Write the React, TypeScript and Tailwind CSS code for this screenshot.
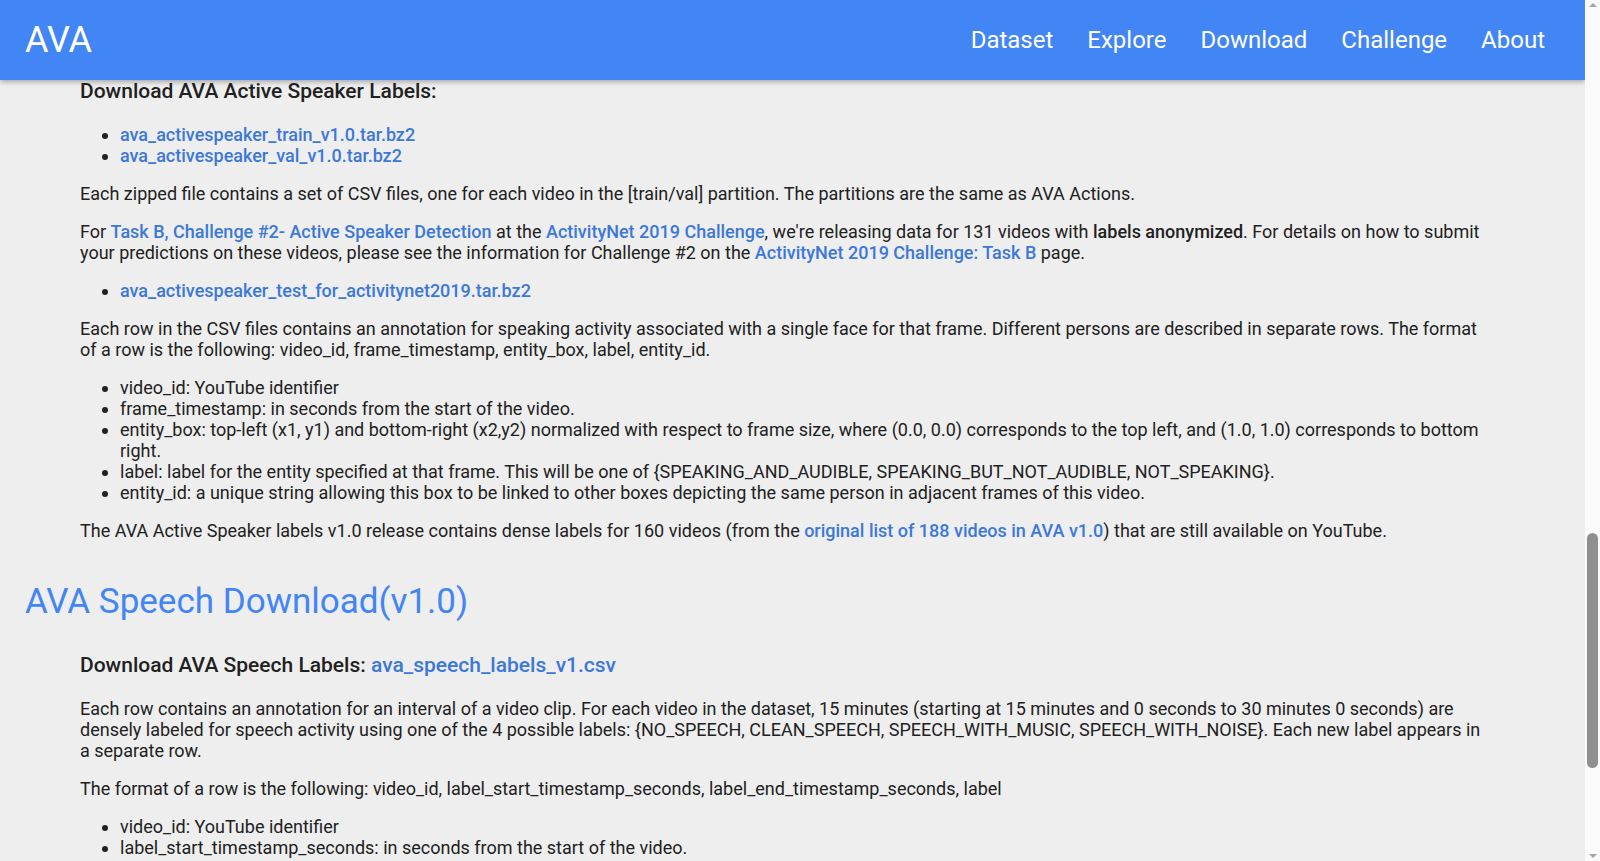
import React from "react";

const A = ({ children }: { children: React.ReactNode }) => (
  <a href="#" className="text-[#3c78d8] font-medium">{children}</a>
);

export default function App() {
  return (
    <div className="flex h-[861px] overflow-hidden" style={{ fontFamily: "Roboto, 'Liberation Sans', sans-serif" }}>
      <div className="flex-1 overflow-hidden bg-[#eeeeee] text-[#212121]">
        <header className="relative z-10 h-[80px] bg-[#4285f4] shadow-[0_2px_5px_rgba(0,0,0,0.3)] flex items-center justify-between pl-[25px] pr-[40px]">
          <div className="text-white text-[36px] font-normal">AVA</div>
          <nav className="flex gap-[34px] text-white text-[24px]">
            <span>Dataset</span><span>Explore</span><span>Download</span><span>Challenge</span><span>About</span>
          </nav>
        </header>
        <main className="text-[18px] leading-[21px]">
          <div className="pl-[80px] pr-[100px]">
            <h3 className="text-[21px] font-medium leading-[25px] -mt-[1px]">Download AVA Active Speaker Labels:</h3>
            <ul className="list-disc pl-[40px] mt-[20px]">
              <li><A>ava_activespeaker_train_v1.0.tar.bz2</A></li>
              <li><A>ava_activespeaker_val_v1.0.tar.bz2</A></li>
            </ul>
            <p className="mt-[17px]">Each zipped file contains a set of CSV files, one for each video in the [train/val] partition. The partitions are the same as AVA Actions.</p>
            <p className="mt-[17px]">For <A>Task B, Challenge #2- Active Speaker Detection</A> at the <A>ActivityNet 2019 Challenge</A>, we're releasing data for 131 videos with <b className="font-medium">labels anonymized</b>. For details on how to submit your predictions on these videos, please see the information for Challenge #2 on the <A>ActivityNet 2019 Challenge: Task B</A> page.</p>
            <ul className="list-disc pl-[40px] mt-[17px]">
              <li><A>ava_activespeaker_test_for_activitynet2019.tar.bz2</A></li>
            </ul>
            <p className="mt-[17px]">Each row in the CSV files contains an annotation for speaking activity associated with a single face for that frame. Different persons are described in separate rows. The format of a row is the following: video_id, frame_timestamp, entity_box, label, entity_id.</p>
            <ul className="list-disc pl-[40px] mt-[17px]">
              <li>video_id: YouTube identifier</li>
              <li>frame_timestamp: in seconds from the start of the video.</li>
              <li>entity_box: top-left (x1, y1) and bottom-right (x2,y2) normalized with respect to frame size, where (0.0, 0.0) corresponds to the top left, and (1.0, 1.0) corresponds to bottom right.</li>
              <li>label: label for the entity specified at that frame. This will be one of {"{"}SPEAKING_AND_AUDIBLE, SPEAKING_BUT_NOT_AUDIBLE, NOT_SPEAKING{"}"}.</li>
              <li>entity_id: a unique string allowing this box to be linked to other boxes depicting the same person in adjacent frames of this video.</li>
            </ul>
            <p className="mt-[17px]">The AVA Active Speaker labels v1.0 release contains dense labels for 160 videos (from the <A>original list of 188 videos in AVA v1.0</A>) that are still available on YouTube.</p>
          </div>
          <h2 className="pl-[25px] text-[35px] leading-[42px] text-[#4285f4] mt-[40px]">AVA Speech Download(v1.0)</h2>
          <div className="pl-[80px] pr-[100px]">
            <h3 className="text-[21px] font-medium leading-[25px] mt-[30px]">Download AVA Speech Labels: <A>ava_speech_labels_v1.csv</A></h3>
            <p className="mt-[20px]">Each row contains an annotation for an interval of a video clip. For each video in the dataset, 15 minutes (starting at 15 minutes and 0 seconds to 30 minutes 0 seconds) are densely labeled for speech activity using one of the 4 possible labels: {"{"}NO_SPEECH, CLEAN_SPEECH, SPEECH_WITH_MUSIC, SPEECH_WITH_NOISE{"}"}. Each new label appears in a separate row.</p>
            <p className="mt-[17px]">The format of a row is the following: video_id, label_start_timestamp_seconds, label_end_timestamp_seconds, label</p>
            <ul className="list-disc pl-[40px] mt-[17px]">
              <li>video_id: YouTube identifier</li>
              <li>label_start_timestamp_seconds: in seconds from the start of the video.</li>
              <li>label_end_timestamp_seconds: in seconds from the start of the video.</li>
              <li>label: label for the interval.</li>
            </ul>
          </div>
        </main>
      </div>
      <div className="w-[15px] bg-[#fafafa] flex flex-col items-center justify-between py-[3px]">
        <div className="w-0 h-0 border-l-[4px] border-r-[4px] border-b-[4px] border-l-transparent border-r-transparent border-b-[#a3a3a3]" />
        <div className="flex-1 w-full flex flex-col pt-[526px] pb-[86px] px-[2px]">
          <div className="flex-1 rounded-full bg-[#8f8f8f]" />
        </div>
        <div className="w-0 h-0 border-l-[4px] border-r-[4px] border-t-[4px] border-l-transparent border-r-transparent border-t-[#a3a3a3]" />
      </div>
    </div>
  );
}
